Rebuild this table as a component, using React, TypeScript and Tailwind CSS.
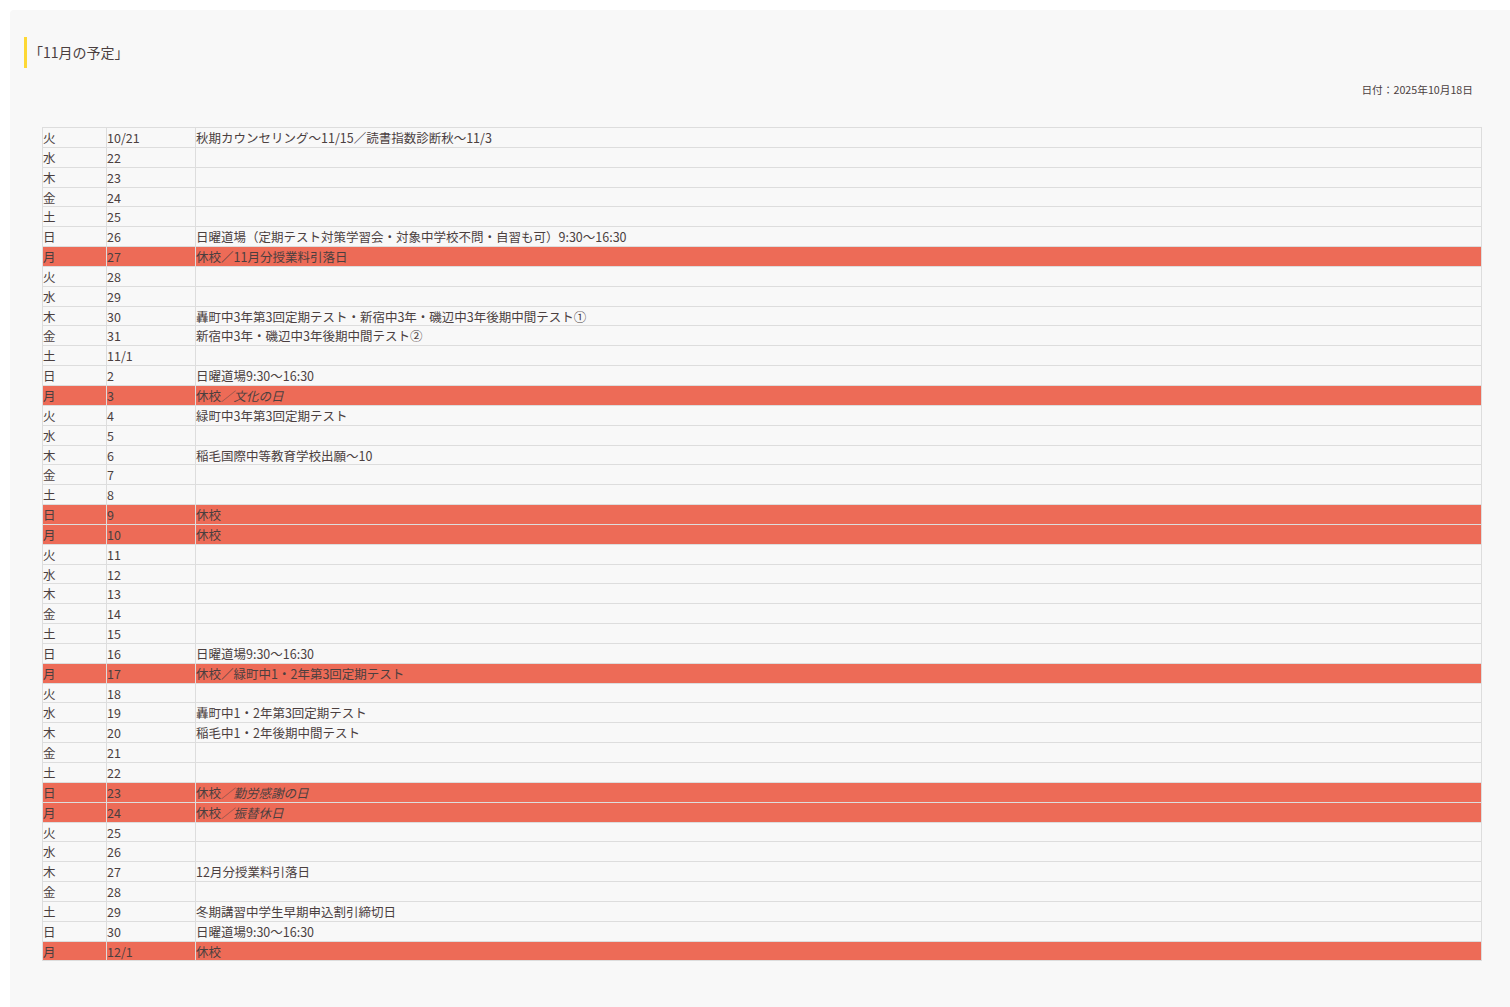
const rows: [string, string, React.ReactNode, boolean?][] = [
  ["火", "10/21", "秋期カウンセリング～11/15／読書指数診断秋～11/3"],
  ["水", "22", ""],
  ["木", "23", ""],
  ["金", "24", ""],
  ["土", "25", ""],
  ["日", "26", "日曜道場（定期テスト対策学習会・対象中学校不問・自習も可）9:30～16:30"],
  ["月", "27", "休校／11月分授業料引落日", true],
  ["火", "28", ""],
  ["水", "29", ""],
  ["木", "30", "轟町中3年第3回定期テスト・新宿中3年・磯辺中3年後期中間テスト①"],
  ["金", "31", "新宿中3年・磯辺中3年後期中間テスト②"],
  ["土", "11/1", ""],
  ["日", "2", "日曜道場9:30～16:30"],
  ["月", "3", <>休校<i>／文化の日</i></>, true],
  ["火", "4", "緑町中3年第3回定期テスト"],
  ["水", "5", ""],
  ["木", "6", "稲毛国際中等教育学校出願～10"],
  ["金", "7", ""],
  ["土", "8", ""],
  ["日", "9", "休校", true],
  ["月", "10", "休校", true],
  ["火", "11", ""],
  ["水", "12", ""],
  ["木", "13", ""],
  ["金", "14", ""],
  ["土", "15", ""],
  ["日", "16", "日曜道場9:30～16:30"],
  ["月", "17", "休校／緑町中1・2年第3回定期テスト", true],
  ["火", "18", ""],
  ["水", "19", "轟町中1・2年第3回定期テスト"],
  ["木", "20", "稲毛中1・2年後期中間テスト"],
  ["金", "21", ""],
  ["土", "22", ""],
  ["日", "23", <>休校<i>／勤労感謝の日</i></>, true],
  ["月", "24", <>休校<i>／振替休日</i></>, true],
  ["火", "25", ""],
  ["水", "26", ""],
  ["木", "27", "12月分授業料引落日"],
  ["金", "28", ""],
  ["土", "29", "冬期講習中学生早期申込割引締切日"],
  ["日", "30", "日曜道場9:30～16:30"],
  ["月", "12/1", "休校", true],
];

const cell = "border border-[#dddddd] p-0 pt-[2px] leading-[16.84px] align-middle";

export default function App() {
  return (
    <div
      className="min-h-[1007px] bg-white pl-[10px] pt-[10px] text-[#4b3f3f]"
      style={{ fontFamily: '"Noto Sans CJK JP", "Noto Sans", sans-serif' }}
    >
      <div className="min-h-[997px] rounded-tl-[4px] bg-[#f8f8f8] pl-[14px] pr-[28px] pt-[27px] pb-[40px]">
        <h2 className="border-l-[3px] border-[#fdd835] pl-[2px] text-[14px] leading-[31px] font-normal">
          「11月の予定」
        </h2>
        <p className="mt-[13px] pr-[9px] text-right text-[10.7px] leading-[18px]">日付：2025年10月18日</p>
        <table className="mt-[28px] ml-[18px] w-[1440px] border-collapse text-[12.5px]">
          <colgroup>
            <col className="w-[64px]" />
            <col className="w-[89px]" />
            <col />
          </colgroup>
          <tbody>
            {rows.map(([day, date, note, off], i) => (
              <tr key={i} className={off ? "bg-[#ed6b57]" : ""}>
                <td className={cell}>{day}</td>
                <td className={cell}>{date}</td>
                <td className={cell}>{note}</td>
              </tr>
            ))}
          </tbody>
        </table>
      </div>
    </div>
  );
}
